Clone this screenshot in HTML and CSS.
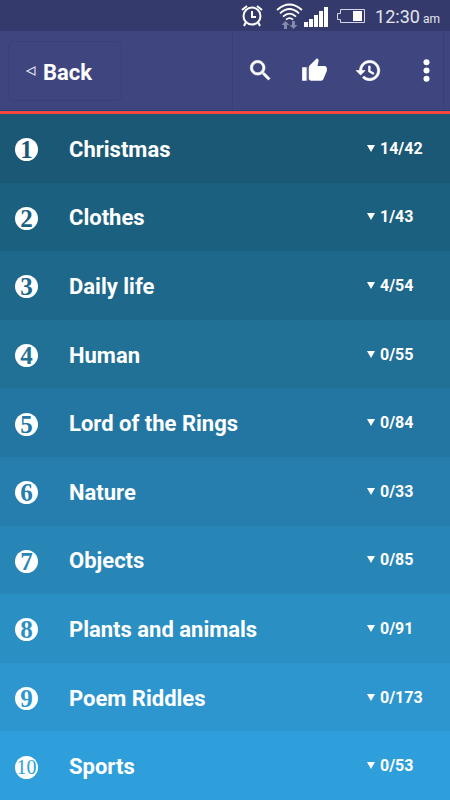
FILE: index.html
```html
<!DOCTYPE html>
<html lang="en">
<head>
<meta charset="utf-8">
<meta name="viewport" content="width=device-width, initial-scale=1">
<title>Riddles</title>
<link rel="stylesheet" href="styles.css">
</head>
<body>
<div class="status">
  <svg class="alarm" viewBox="0 0 22 24" fill="none" stroke="#fff" stroke-width="2"><circle cx="11" cy="12" r="8.500"/><path d="M11 7v6h4M5 18l-2 4M17 18l2 4M1 6l5-4M21 6l-5-4"/></svg>
  <svg class="wifi" viewBox="0 0 27 26" fill="none" stroke="#fff" stroke-width="1.800"><path d="M1 7q12.500-11 25 0M4 10.300q9.500-8.500 19 0M7 13.600q6.500-6 13 0M10 16.600q3.500-3 7 0"/><path d="M9.500 18l4 4h-2.500v4h-3v-4H5.500zM17.500 26l-4-4h2.500v-4h3v4h2.500z" fill="#8589ab" stroke="none"/></svg>
  <svg class="signal" viewBox="0 0 24 20" fill="#fff"><path d="M0 15h4v5H0zM5 12h4v8H5zM10 8h4v12h-4zM15 4h4v16h-4zM20 0h4v20h-4z"/></svg>
  <svg class="battery" viewBox="0 0 29 16"><path d="M4.500 1.500h24v13h-24v-3h-3v-6h3z" fill="none" stroke="#d5d6e2"/><path d="M17 3h9v10h-9z" fill="#fff"/></svg>
  <span class="time">12:30<small>am</small></span>
</div>
<header class="bar">
  <button class="back" type="button"><svg viewBox="0 0 10 10" fill="none" stroke="#dfe0ec" stroke-width="1.200"><path d="M1 5l8-4v8z"/></svg><span>Back</span></button>
  <div class="tools">
    <button type="button" aria-label="Search"><svg viewBox="0 0 24 24"><path d="M15.500 14h-.79l-.28-.27C15.410 12.590 16 11.110 16 9.500 16 5.910 13.090 3 9.500 3S3 5.910 3 9.500 5.910 16 9.500 16c1.610 0 3.090-.59 4.230-1.570l.27.28v.79l5 4.990L20.490 19l-4.990-5zm-6 0C7.010 14 5 11.990 5 9.500S7.010 5 9.500 5 14 7.010 14 9.500 11.990 14 9.500 14z" stroke="#fff" stroke-width=".6"/></svg></button>
    <button type="button" aria-label="Like"><svg viewBox="0 0 24 24"><path d="M1 21h4V9H1v12zm22-11c0-1.100-.9-2-2-2h-6.310l.95-4.570.03-.32c0-.41-.17-.79-.44-1.060L14.170 1 7.590 7.590C7.220 7.950 7 8.450 7 9v10c0 1.100.9 2 2 2h9c.83 0 1.540-.5 1.840-1.220l3.020-7.050c.09-.23.14-.47.14-.73v-2z"/><path d="M5 9h2v12H5z" opacity=".15"/></svg></button>
    <button type="button" aria-label="History"><svg viewBox="0 0 24 24"><path d="M13 3c-4.970 0-9 4.030-9 9H1l3.890 3.890.07.14L9 12H6c0-3.870 3.130-7 7-7s7 3.130 7 7-3.130 7-7 7c-1.930 0-3.680-.79-4.940-2.060l-1.420 1.420C8.270 19.990 10.510 21 13 21c4.970 0 9-4.030 9-9s-4.030-9-9-9zm-1 5v5l4.280 2.540.72-1.210-3.500-2.080V8H12z" stroke="#fff" stroke-width=".6"/></svg></button>
    <button class="more" type="button" aria-label="More options"><svg viewBox="0 0 24 24"><circle cx="12" cy="6" r="2.200"/><circle cx="12" cy="12" r="2.200"/><circle cx="12" cy="18" r="2.200"/></svg></button>
  </div>
</header>
<main class="list">
  <a class="row r1" href="#"><span class="num">1</span><span class="name">Christmas</span><span class="count">14/42</span></a>
  <a class="row r2" href="#"><span class="num">2</span><span class="name">Clothes</span><span class="count">1/43</span></a>
  <a class="row r3" href="#"><span class="num">3</span><span class="name">Daily life</span><span class="count">4/54</span></a>
  <a class="row r4" href="#"><span class="num">4</span><span class="name">Human</span><span class="count">0/55</span></a>
  <a class="row r5" href="#"><span class="num">5</span><span class="name">Lord of the Rings</span><span class="count">0/84</span></a>
  <a class="row r6" href="#"><span class="num">6</span><span class="name">Nature</span><span class="count">0/33</span></a>
  <a class="row r7" href="#"><span class="num">7</span><span class="name">Objects</span><span class="count">0/85</span></a>
  <a class="row r8" href="#"><span class="num">8</span><span class="name">Plants and animals</span><span class="count">0/91</span></a>
  <a class="row r9" href="#"><span class="num">9</span><span class="name">Poem Riddles</span><span class="count">0/173</span></a>
  <a class="row r10" href="#"><span class="num wide">10</span><span class="name">Sports</span><span class="count">0/53</span></a>
</main>
</body>
</html>
```
FILE: styles.css
```css
* { box-sizing: border-box; }
body {
  margin: 0;
  min-height: 100vh;
  display: flex;
  flex-direction: column;
  font-family: Roboto, "Liberation Sans", sans-serif;
  color: #fff;
  background: #2e9fda;
}
svg { display: block; }
button {
  padding: 0;
  border: 0;
  background: none;
  color: inherit;
  font: inherit;
}
.status {
  height: 31px;
  padding: 0 10px;
  display: flex;
  align-items: center;
  justify-content: flex-end;
  background: #343a6c;
}
.alarm { width: 22px; height: 24px; margin-right: 13px; }
.wifi { width: 27px; height: 26px; margin-right: 1px; }
.signal { width: 24px; height: 20px; margin: 2px 8px 0 0; }
.battery { width: 29px; height: 16px; margin-right: 10px; }
.time { padding-top: 2px; font-size: 18px; color: #e4e5ee; white-space: nowrap; }
.time small { margin-left: 3px; font-size: 12px; }
.bar {
  height: 83px;
  display: flex;
  justify-content: space-between;
  align-items: center;
  padding: 0 6px 1px 8px;
  background: #3e457f;
  border-bottom: 3px solid #f6453a;
  box-shadow: inset 0 -1px #124a80;
}
.back {
  width: 114px;
  height: 60px;
  padding-left: 17px;
  display: flex;
  align-items: center;
  gap: 7px;
  border: 1px solid #3b4178;
  border-radius: 5px;
  font-size: 22px;
  font-weight: 700;
}
.back span { padding-top: 3px; }
.back svg { width: 10px; height: 10px; }
.tools {
  align-self: stretch;
  display: flex;
  border: solid #3a4076;
  border-width: 0 1px;
}
.tools button {
  width: 54px;
  display: flex;
  align-items: center;
  justify-content: center;
}
.tools svg { width: 27px; height: 27px; fill: #fff; }
.tools .more { width: 48px; justify-content: flex-end; }
.tools .more svg { width: 33px; height: 33px; }
.list {
  flex: 1;
  display: flex;
  flex-direction: column;
}
.row {
  flex: 1;
  min-height: 60px;
  display: grid;
  grid-template-columns: 54px 1fr 83px;
  align-items: center;
  padding-left: 15px;
  background: var(--shade);
  color: #fff;
  text-decoration: none;
  font-weight: 700;
}
.num {
  width: 23px;
  height: 23px;
  margin-top: 3px;
  border-radius: 50%;
  background: #fff;
  color: var(--shade);
  font: bold 25px/23px "Liberation Serif", serif;
  text-align: center;
}
.num.wide { font-size: 20px; font-weight: 400; }
.name { padding-top: 2px; font-size: 22px; }
.count {
  display: flex;
  align-items: center;
  gap: 5px;
  font-size: 16px;
}
.count::before {
  content: "";
  border: 4px solid transparent;
  border-top: 7px solid #fff;
  border-bottom: 0;
}
.r1 { --shade: #1b5875; }
.r2 { --shade: #1c6080; }
.r3 { --shade: #1e688b; }
.r4 { --shade: #217096; }
.r5 { --shade: #2376a2; }
.r6 { --shade: #257eae; }
.r7 { --shade: #2886b7; }
.r8 { --shade: #2a8fc2; }
.r9 { --shade: #2d96cf; }
.r10 { --shade: #2e9fda; }
```
